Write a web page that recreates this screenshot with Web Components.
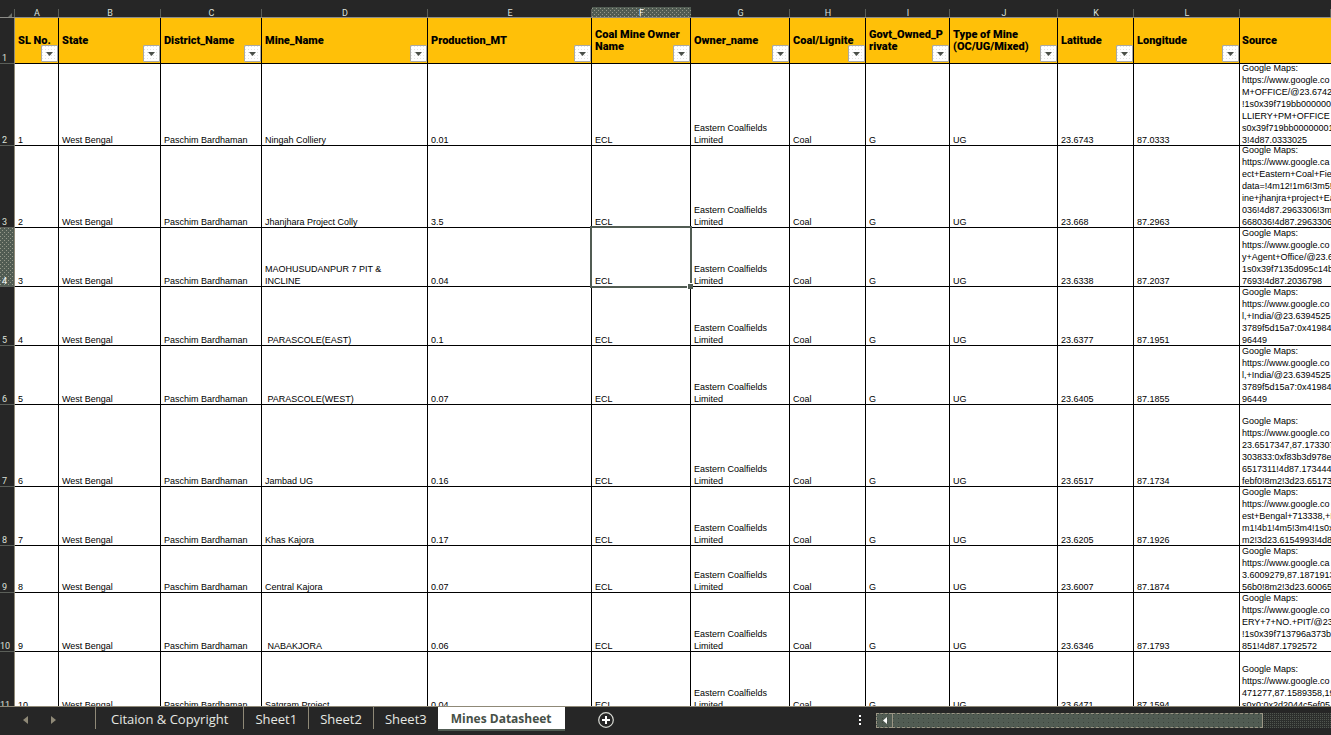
<!DOCTYPE html>
<html lang="en">
<head>
<meta charset="utf-8">
<title>Mines Datasheet</title>
<style>
html,body{height:100%;margin:0}
body{background:#262626;font-family:Roboto,"Liberation Sans",sans-serif;overflow:hidden}
</style>
</head>
<body>
<sheet-app>
  <sheet-grid></sheet-grid>
  <sheet-bar slot="bar">
    <sheet-tab>Citaion &amp; Copyright</sheet-tab>
    <sheet-tab>Sheet1</sheet-tab>
    <sheet-tab>Sheet2</sheet-tab>
    <sheet-tab>Sheet3</sheet-tab>
    <sheet-tab active>Mines Datasheet</sheet-tab>
  </sheet-bar>
</sheet-app>

<script>
const define = (name, html, init) => {
  const t = document.createElement('template');
  t.innerHTML = html;
  customElements.define(name, class extends HTMLElement {
    constructor() {
      super();
      this.attachShadow({mode: 'open'}).append(t.content.cloneNode(true));
    }
    connectedCallback() { if (init) init(this, this.shadowRoot); }
  });
};

define('sheet-app', `
<style>
:host{display:flex;flex-direction:column;height:100vh}
main{flex:1;min-height:0;overflow:hidden;background:#fff}
footer{flex:none}
</style>
<main><slot></slot></main>
<footer><slot name="bar"></slot></footer>`);

define('filter-button', `
<style>
:host{display:block}
button{display:flex;align-items:center;justify-content:center;width:17px;height:17px;padding:0;border:1px solid #a9a9a4;border-radius:1px;
 background:conic-gradient(from 270deg at 1px 1px,#e2e2de 90deg,transparent 0) 0 0/3px 3px,#fff}
svg{display:block}
</style>
<button aria-label="Filter"><svg width="7" height="4" viewBox="0 0 7 4"><path d="M0 0h7L3.5 4z" fill="#4a4f48"/></svg></button>`);

const columns = [
  ['A', 44, 'SL No.'], ['B', 102, 'State'], ['C', 101, 'District_Name'], ['D', 166, 'Mine_Name'],
  ['E', 164, 'Production_MT'], ['F', 99, 'Coal Mine Owner\nName'], ['G', 99, 'Owner_name'],
  ['H', 76, 'Coal/Lignite'], ['I', 84, 'Govt_Owned_P\nrivate'], ['J', 108, 'Type of Mine\n(OC/UG/Mixed)'],
  ['K', 76, 'Latitude'], ['L', 106, 'Longitude'], ['', 0, 'Source']
];
const rows = [
  [82, 'Ningah Colliery', '0.01', '23.6743', '87.0333', 'Google Maps:\nhttps://www.google.co\nM+OFFICE/@23.6742\n!1s0x39f719bb0000000\nLLIERY+PM+OFFICE\ns0x39f719bb00000001\n3!4d87.0333025'],
  [82, 'Jhanjhara Project Colly', '3.5', '23.668', '87.2963', 'Google Maps:\nhttps://www.google.ca\nect+Eastern+Coal+Fie\ndata=!4m12!1m6!3m5!1\nine+jhanjra+project+Ea\n036!4d87.2963306!3m\n668036!4d87.2963306'],
  [59, 'MAOHUSUDANPUR 7 PIT &\nINCLINE', '0.04', '23.6338', '87.2037', 'Google Maps:\nhttps://www.google.co\ny+Agent+Office/@23.6\n1s0x39f7135d095c14b5\n7693!4d87.2036798'],
  [59, ' PARASCOLE(EAST)', '0.1', '23.6377', '87.1951', 'Google Maps:\nhttps://www.google.co\nl,+India/@23.6394525,\n3789f5d15a7:0x419844\n96449'],
  [59, ' PARASCOLE(WEST)', '0.07', '23.6405', '87.1855', 'Google Maps:\nhttps://www.google.co\nl,+India/@23.6394525,\n3789f5d15a7:0x419844\n96449'],
  [82, 'Jambad UG', '0.16', '23.6517', '87.1734', 'Google Maps:\nhttps://www.google.co\n23.6517347,87.173307\n303833:0xf83b3d978e\n6517311!4d87.1734441!\nfebf0!8m2!3d23.65173'],
  [59, 'Khas Kajora', '0.17', '23.6205', '87.1926', 'Google Maps:\nhttps://www.google.co\nest+Bengal+713338,+In\nm1!4b1!4m5!3m4!1s0x3\nm2!3d23.6154993!4d87'],
  [47, 'Central Kajora', '0.07', '23.6007', '87.1874', 'Google Maps:\nhttps://www.google.ca\n3.6009279,87.1871913,\n56b0!8m2!3d23.60065'],
  [59, ' NABAKJORA', '0.06', '23.6346', '87.1793', 'Google Maps:\nhttps://www.google.co\nERY+7+NO.+PIT/@23\n!1s0x39f713796a373bc\n851!4d87.1792572'],
  [59, 'Satgram Project', '0.04', '23.6471', '87.1594', 'Google Maps:\nhttps://www.google.co\n471277,87.1589358,19.\ns0x0:0x2d2044c5ef05']
];

define('sheet-grid', `
<style>
:host{display:block;color:#000;font-size:9px;line-height:12px}
table{table-layout:fixed;border-collapse:separate;border-spacing:0;width:100%;min-width:1331px}
th,td{padding:0;text-align:left;font-weight:400;border-right:1px solid #000;border-bottom:1px solid #000;vertical-align:bottom}
td{font-family:"Liberation Sans",sans-serif}
td div,.names div{white-space:pre;padding-left:3px}
td div{display:flex;flex-direction:column;justify-content:flex-end;height:var(--h);overflow:hidden}
td span{margin-bottom:-1px}
.names th{position:relative;height:45px;background:#ffc008;vertical-align:middle;font-size:11px;font-weight:900}
.names filter-button{position:absolute;right:0;bottom:1px}
.letters th{height:17px;color:#dde0da;font-size:9px;text-align:center;border-right:0;border-bottom-color:#8c8c88;
 background:linear-gradient(#262626 9px,transparent 9px),linear-gradient(#5b5f59,#5b5f59) right/1px 100% no-repeat,#262626}
.letters th div{display:flex;align-items:center;justify-content:center;height:9px;margin-top:7px}
.letters .on,tbody .on{color:#fff;background:
 conic-gradient(from 270deg at 1px 1px,#96988a 90deg,transparent 0) 0 0/4px 4px,
 conic-gradient(from 270deg at 1px 1px,#96988a 90deg,transparent 0) 2px 2px/4px 4px,#515c53}
.letters .on{background:linear-gradient(#262626,#262626) 0 0/100% 7px no-repeat,
 conic-gradient(from 270deg at 1px 1px,#96988a 90deg,transparent 0) 0 0/4px 4px,
 conic-gradient(from 270deg at 1px 1px,#96988a 90deg,transparent 0) 2px 2px/4px 4px,#515c53}
th.num{background:#262626;color:#dde0da;vertical-align:bottom;border-right-color:#8f8977;border-bottom-color:#5b5f59}
.names th.num{background:#262626;font-size:9px;font-weight:400;vertical-align:bottom}
tbody th.on{color:#fff;background:
 conic-gradient(from 270deg at 1px 1px,#96988a 90deg,transparent 0) 0 0/4px 4px,
 conic-gradient(from 270deg at 1px 1px,#96988a 90deg,transparent 0) 2px 2px/4px 4px,#515c53}
th.num div,.names th.num div{padding:0 0 0 2px;line-height:10px}
th.num.long div{padding:0}
th:last-child,td:last-child{border-right:0}
th:last-child div,td:last-child div{padding-left:2px}
.sel{position:relative}
.sel::before{content:"";position:absolute;inset:-2px;border:2px solid #515c53}
.sel::after{content:"";position:absolute;right:-3px;bottom:-3px;width:5px;height:5px;background:#515c53;border:1px solid #fff;border-right:0;border-bottom:0}
svg{display:block;margin-left:8px}
</style>
<table>
  <colgroup></colgroup>
  <thead><tr class="letters"></tr><tr class="names"></tr></thead>
  <tbody></tbody>
</table>`, (el, root) => {
  const pick = s => root.querySelector(s);
  pick('colgroup').innerHTML = '<col style="width:15px">' +
    columns.map(c => c[1] ? `<col style="width:${c[1]}px">` : '<col>').join('');
  pick('.letters').innerHTML = '<th><svg width="4" height="4" viewBox="0 0 4 4"><path d="M4 0v4H0z" fill="#6d716a"/></svg></th>' +
    columns.map(c => `<th scope="col"${c[0] === 'F' ? ' class="on"' : ''}><div>${c[0]}</div></th>`).join('');
  pick('.names').innerHTML = '<th class="num"><div>1</div></th>' +
    columns.map(c => `<th scope="col"><div>${c[2]}</div>${c[1] ? '<filter-button></filter-button>' : ''}</th>`).join('');
  pick('tbody').innerHTML = rows.map(([h, mine, mt, lat, lon, src], i) => {
    const cells = [i + 1, 'West Bengal', 'Paschim Bardhaman', mine, mt, 'ECL', 'Eastern Coalfields\nLimited', 'Coal', 'G', 'UG', lat, lon, src];
    return `<tr style="--h:${h - 1}px"><th scope="row" class="num${i === 2 ? ' on' : ''}${i > 7 ? ' long' : ''}"><div>${i + 2}</div></th>` +
      cells.map((c, j) => `<td${i === 2 && j === 5 ? ' class="sel"' : ''}><div><span>${String(c).replace('&', '&amp;')}</span></div></td>`).join('') + '</tr>';
  }).join('');
});

define('sheet-tab', `
<style>
:host{display:block}
button{display:block;height:22px;padding:0 11px;border:0;border-right:1px solid #8f8977;background:none;color:#e6e8e3;
 font:13px/24px "Open Sans","Noto Sans",sans-serif;white-space:nowrap}
:host(:first-child) button{padding:0 15px;border-left:1px solid #8f8977}
:host([active]) button{height:24px;margin-left:-1px;padding:0 13px;border:0;border-bottom:2px solid #515c53;background:#fff;color:#465047;font-weight:700;font-size:12px;line-height:24px}
</style>
<button role="tab"><slot></slot></button>`, (el, root) =>
  root.querySelector('button').setAttribute('aria-selected', el.hasAttribute('active')));

define('sheet-scroll', `
<style>
:host{display:flex;flex:0 0 455px;height:15px;background:
 conic-gradient(from 270deg at 1px 1px,#50564f 90deg,transparent 0) 0 0/2px 2px,#2c2e2c}
button{display:flex;align-items:center;justify-content:center;padding:0;border:1px dashed #9b9685;
 background:conic-gradient(from 270deg at 1px 1px,#3c443d 90deg,transparent 0) 0 0/5px 4px,#515c53}
.left{width:16px;border-right:0}
.thumb{width:371px;border-right-style:solid;border-left-style:solid}
</style>
<button class="left" aria-label="Scroll left"><svg width="4" height="7" viewBox="0 0 4 7"><path d="M4 0v7L0 3.5z" fill="#fff"/></svg></button>
<button class="thumb" aria-label="Horizontal scroll"></button>`);

define('sheet-bar', `
<style>
:host{display:flex;height:28px;align-items:flex-start;background:#262626;border-top:1px solid #8f8977}
nav{display:flex;flex:none;width:95px;height:26px;align-items:center;gap:16px;box-sizing:border-box;padding-left:19px}
button{display:flex;align-items:center;justify-content:center;padding:0;border:0;background:none;width:16px;height:16px}
nav button{width:12px}
[role=tablist]{display:flex}
.add{margin:5px 0 0 33px}
.more{margin:5px 8px 0 auto}
sheet-scroll{margin-top:6px}
</style>
<nav aria-label="Sheets">
  <button aria-label="Previous"><svg width="5" height="8" viewBox="0 0 5 8"><path d="M5 0v8L0 4z" fill="#8f8977"/></svg></button>
  <button aria-label="Next"><svg width="5" height="8" viewBox="0 0 5 8"><path d="M0 0v8l5-4z" fill="#8f8977"/></svg></button>
</nav>
<div role="tablist"><slot></slot></div>
<button class="add" aria-label="New sheet"><svg width="16" height="16" viewBox="0 0 16 16"><circle cx="8" cy="8" r="7.3" fill="none" stroke="#d8dad4" stroke-width="1.2"/><path d="M8 4v8M4 8h8" stroke="#fff" stroke-width="2"/></svg></button>
<button class="more" aria-label="Resize"><svg width="2" height="10" viewBox="0 0 2 10"><path d="M0 0h2v2H0zM0 4h2v2H0zM0 8h2v2H0z" fill="#fff"/></svg></button>
<sheet-scroll></sheet-scroll>`);
</script>
</body>
</html>
